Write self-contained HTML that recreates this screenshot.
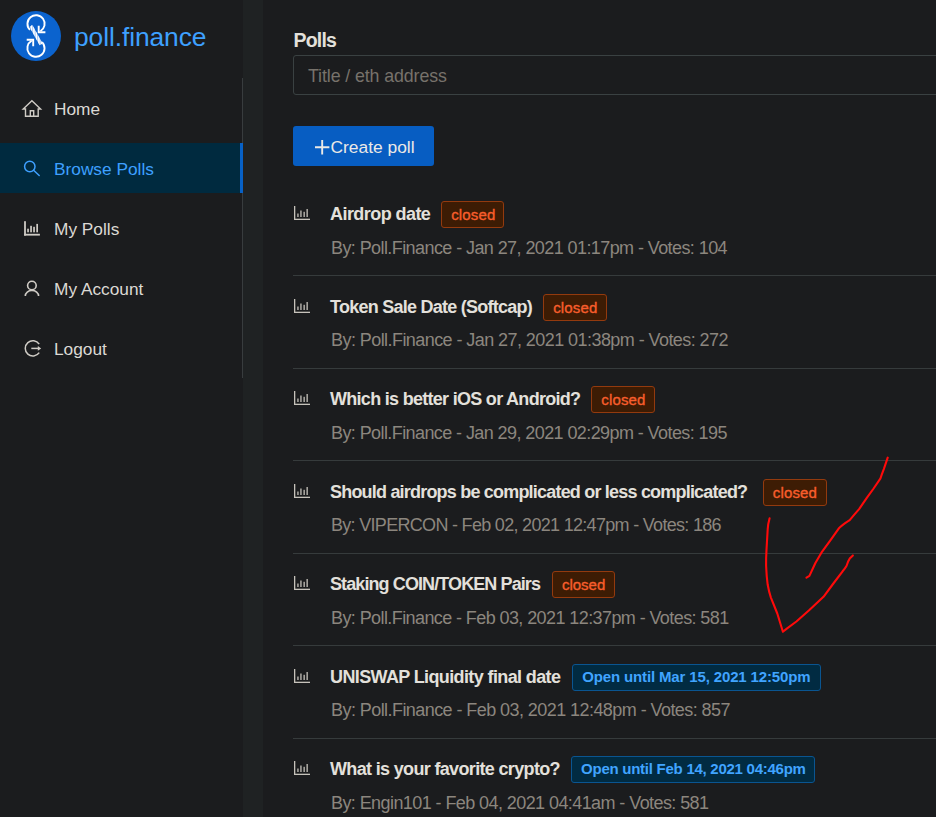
<!DOCTYPE html>
<html><head><meta charset="utf-8">
<style>
*{box-sizing:border-box;margin:0;padding:0}
html,body{width:936px;height:817px;overflow:hidden;background:#1b1c1e;font-family:"Liberation Sans",sans-serif}
.abs{position:absolute}
.t{position:absolute;white-space:nowrap;line-height:1}
#sider{left:0;top:0;width:243px;height:817px;background:#1b1c1e}
#gutter{left:243px;top:0;width:20px;height:817px;background:#1f2223}
#menuline{left:242px;top:78px;width:1px;height:300px;background:#383c3e}
.sel{left:0;top:143px;width:243px;height:50px;background:#002a3f}
.selbar{left:240px;top:143px;width:3px;height:50px;background:#0761c6}
.mi{font-size:17.3px;color:#dcd9d4}
.div{left:293px;width:643px;height:1px;background:#363b3c}
.title{font-size:16.6px;font-weight:700;color:#e3e0db}
.sub{font-size:16.7px;color:#8c867e}
.tag{position:absolute;height:27px;border:1px solid;border-radius:3px;font-size:15px;line-height:25px;white-space:nowrap;padding:0 9px}
.closed{background:#3d1c04;border-color:#933a0e;color:#f85e2c;font-size:15px;-webkit-text-stroke:0.35px #f85e2c}
.open{background:#012b42;border-color:#0a5591;color:#40a4ff;font-size:15px;font-weight:700;line-height:23px}
svg{position:absolute;overflow:visible}
</style></head><body>
<div id="sider" class="abs"></div>
<div id="gutter" class="abs"></div>
<div id="menuline" class="abs"></div>
<div class="abs sel"></div>
<div class="abs selbar"></div>

<!-- logo -->
<svg style="left:0;top:0" width="80" height="78" viewBox="0 0 80 78">
  <circle cx="36" cy="36" r="25" fill="#0b63ce"/>
  <g fill="none" stroke="#ffffff" stroke-width="1.9">
    <path d="M30.0 29.9 A8.6 8.6 0 1 1 40.4 31.2"/>
    <path d="M38.7 25.8 L38.7 32.3 L45.4 32.3"/>
    <path d="M42.0 42.1 A8.6 8.6 0 1 1 31.6 40.8"/>
    <path d="M26.7 39.8 L33.2 39.8 L33.2 46.3"/>
  </g>
  <defs><clipPath id="rc"><path d="M29.4 26.8 L32.4 25 L42.6 43.6 L39.6 45.2 Z"/></clipPath></defs>
  <path d="M29.4 26.8 L32.4 25 L42.6 43.6 L39.6 45.2 Z" fill="#a9c9f2"/>
  <g clip-path="url(#rc)" stroke="#ffffff" stroke-width="1.5">
   <path d="M31.4 23 V33 M33.9 26.5 V37.5 M36.4 31 V41.5 M38.9 35 V46 M41.4 39.5 V48"/>
  </g>
</svg>
<div class="t" style="left:74px;top:24.2px;font-size:26.4px;color:#3ea0ff;letter-spacing:-0.1px">poll.finance</div>

<!-- menu -->
<svg style="left:0;top:80px" width="60" height="300" viewBox="0 80 60 300">
 <g fill="none" stroke="#cfcbc5" stroke-width="1.4" stroke-linejoin="miter">
  <path d="M25.5 116.2 L25.5 109 L23.2 109 L31.9 100.8 L40.6 109 L38.2 109 L38.2 116.2 Z"/>
  <path d="M30.3 116.2 L30.3 110.8 L33.7 110.8 L33.7 116.2"/>
 </g>
 <g fill="none" stroke="#3ea0ff" stroke-width="1.5" stroke-linecap="round">
  <circle cx="29.8" cy="166.5" r="5.2"/>
  <path d="M33.6 170.2 L39.2 175.5"/>
 </g>
 <g fill="#cfcbc5">
  <rect x="24.1" y="221.2" width="1.8" height="14.4"/>
  <rect x="24.1" y="233.8" width="15.8" height="1.8"/>
  <rect x="27.2" y="228.7" width="1.7" height="3.6"/>
  <rect x="30.2" y="225.8" width="1.7" height="6.5"/>
  <rect x="33.2" y="226.8" width="1.7" height="5.5"/>
  <rect x="36.3" y="223.9" width="1.7" height="8.4"/>
 </g>
 <g fill="none" stroke="#cfcbc5" stroke-width="1.6">
  <circle cx="31.9" cy="285.5" r="4.3"/>
  <path d="M25.3 296 A6.65 5.6 0 0 1 38.6 296"/>
 </g>
 <g fill="none" stroke="#cfcbc5" stroke-width="1.5">
  <path d="M39.2 344.2 A7.6 7.6 0 1 0 39.2 352.6"/>
  <path d="M31.3 348.4 L38.5 348.4"/>
 </g>
 <path d="M37.8 346 L41.2 348.4 L37.8 350.8 Z" fill="#cfcbc5"/>
</svg>
<div class="t mi" style="left:54px;top:100.8px">Home</div>
<div class="t mi" style="left:54px;top:160.8px;color:#3ea0ff">Browse Polls</div>
<div class="t mi" style="left:54px;top:220.8px">My Polls</div>
<div class="t mi" style="left:54px;top:280.8px">My Account</div>
<div class="t mi" style="left:54px;top:340.8px">Logout</div>

<!-- content header -->
<div class="t" style="left:293.5px;top:30.6px;font-size:19.5px;font-weight:700;color:#e3e0db;letter-spacing:-0.8px">Polls</div>
<div class="abs" style="left:293px;top:55px;width:700px;height:40px;border:1px solid #3a4142;border-radius:3px"></div>
<div class="t" style="left:308px;top:67.5px;font-size:17.8px;color:#77726b;letter-spacing:-0.1px">Title / eth address</div>
<div class="abs" style="left:293px;top:126px;width:141px;height:40px;background:#075dc2;border-radius:3px"></div>
<svg style="left:314.8px;top:139.8px" width="14.4" height="14.4" viewBox="0 0 14.4 14.4"><path d="M0 7.2 H14.4 M7.2 0 V14.4" stroke="#ebe9e6" stroke-width="1.9"/></svg>
<div class="t" style="left:330.5px;top:139.4px;font-size:17.4px;color:#ebe9e6">Create poll</div>


<div class="abs div" style="top:275.00px"></div>
<svg style="left:294px;top:206.00px" width="16" height="14" viewBox="0 0 16 14"><g fill="#c6c2bb"><rect x="0" y="0" width="1.3" height="14"/><rect x="0" y="12.7" width="16" height="1.3"/><rect x="3.3" y="7.5" width="1.3" height="3.5"/><rect x="6.3" y="4.5" width="1.3" height="6.5"/><rect x="9.5" y="5.8" width="1.3" height="5.2"/><rect x="12.5" y="3" width="1.3" height="8"/></g></svg>
<div class="t title" style="left:330px;top:205.16px;font-size:18.0px;letter-spacing:-0.562px">Airdrop date</div>
<div class="tag closed" style="left:441.2px;width:62.5px;top:201.10px;letter-spacing:0.162px">closed</div>
<div class="t sub" style="left:331px;top:238.96px;font-size:18.0px;letter-spacing:-0.582px">By: Poll.Finance - Jan 27, 2021 01:17pm - Votes: 104</div>
<div class="abs div" style="top:367.50px"></div>
<svg style="left:294px;top:298.50px" width="16" height="14" viewBox="0 0 16 14"><g fill="#c6c2bb"><rect x="0" y="0" width="1.3" height="14"/><rect x="0" y="12.7" width="16" height="1.3"/><rect x="3.3" y="7.5" width="1.3" height="3.5"/><rect x="6.3" y="4.5" width="1.3" height="6.5"/><rect x="9.5" y="5.8" width="1.3" height="5.2"/><rect x="12.5" y="3" width="1.3" height="8"/></g></svg>
<div class="t title" style="left:330px;top:297.66px;font-size:18.0px;letter-spacing:-0.750px">Token Sale Date (Softcap)</div>
<div class="tag closed" style="left:543.2px;width:63.4px;top:293.60px;letter-spacing:0.162px">closed</div>
<div class="t sub" style="left:331px;top:331.46px;font-size:18.0px;letter-spacing:-0.564px">By: Poll.Finance - Jan 27, 2021 01:38pm - Votes: 272</div>
<div class="abs div" style="top:460.00px"></div>
<svg style="left:294px;top:391.00px" width="16" height="14" viewBox="0 0 16 14"><g fill="#c6c2bb"><rect x="0" y="0" width="1.3" height="14"/><rect x="0" y="12.7" width="16" height="1.3"/><rect x="3.3" y="7.5" width="1.3" height="3.5"/><rect x="6.3" y="4.5" width="1.3" height="6.5"/><rect x="9.5" y="5.8" width="1.3" height="5.2"/><rect x="12.5" y="3" width="1.3" height="8"/></g></svg>
<div class="t title" style="left:330px;top:390.16px;font-size:18.0px;letter-spacing:-0.708px">Which is better iOS or Android?</div>
<div class="tag closed" style="left:591.3px;width:63.8px;top:386.10px;letter-spacing:0.162px">closed</div>
<div class="t sub" style="left:331px;top:423.96px;font-size:18.0px;letter-spacing:-0.585px">By: Poll.Finance - Jan 29, 2021 02:29pm - Votes: 195</div>
<div class="abs div" style="top:552.50px"></div>
<svg style="left:294px;top:483.50px" width="16" height="14" viewBox="0 0 16 14"><g fill="#c6c2bb"><rect x="0" y="0" width="1.3" height="14"/><rect x="0" y="12.7" width="16" height="1.3"/><rect x="3.3" y="7.5" width="1.3" height="3.5"/><rect x="6.3" y="4.5" width="1.3" height="6.5"/><rect x="9.5" y="5.8" width="1.3" height="5.2"/><rect x="12.5" y="3" width="1.3" height="8"/></g></svg>
<div class="t title" style="left:330px;top:482.66px;font-size:18.0px;letter-spacing:-0.800px">Should airdrops be complicated or less complicated?</div>
<div class="tag closed" style="left:762.8px;width:64.0px;top:478.60px;letter-spacing:0.162px">closed</div>
<div class="t sub" style="left:331px;top:516.46px;font-size:18.0px;letter-spacing:-0.694px">By: VIPERCON - Feb 02, 2021 12:47pm - Votes: 186</div>
<div class="abs div" style="top:645.00px"></div>
<svg style="left:294px;top:576.00px" width="16" height="14" viewBox="0 0 16 14"><g fill="#c6c2bb"><rect x="0" y="0" width="1.3" height="14"/><rect x="0" y="12.7" width="16" height="1.3"/><rect x="3.3" y="7.5" width="1.3" height="3.5"/><rect x="6.3" y="4.5" width="1.3" height="6.5"/><rect x="9.5" y="5.8" width="1.3" height="5.2"/><rect x="12.5" y="3" width="1.3" height="8"/></g></svg>
<div class="t title" style="left:330px;top:575.16px;font-size:18.0px;letter-spacing:-0.903px">Staking COIN/TOKEN Pairs</div>
<div class="tag closed" style="left:552px;width:62.9px;top:571.10px;letter-spacing:-0.018px">closed</div>
<div class="t sub" style="left:331px;top:608.96px;font-size:18.0px;letter-spacing:-0.589px">By: Poll.Finance - Feb 03, 2021 12:37pm - Votes: 581</div>
<div class="abs div" style="top:737.50px"></div>
<svg style="left:294px;top:668.50px" width="16" height="14" viewBox="0 0 16 14"><g fill="#c6c2bb"><rect x="0" y="0" width="1.3" height="14"/><rect x="0" y="12.7" width="16" height="1.3"/><rect x="3.3" y="7.5" width="1.3" height="3.5"/><rect x="6.3" y="4.5" width="1.3" height="6.5"/><rect x="9.5" y="5.8" width="1.3" height="5.2"/><rect x="12.5" y="3" width="1.3" height="8"/></g></svg>
<div class="t title" style="left:330px;top:667.66px;font-size:18.0px;letter-spacing:-0.620px">UNISWAP Liquidity final date</div>
<div class="tag open" style="left:572.2px;width:248.4px;top:663.60px;letter-spacing:-0.138px">Open until Mar 15, 2021 12:50pm</div>
<div class="t sub" style="left:331px;top:701.46px;font-size:18.0px;letter-spacing:-0.564px">By: Poll.Finance - Feb 03, 2021 12:48pm - Votes: 857</div>
<svg style="left:294px;top:761.00px" width="16" height="14" viewBox="0 0 16 14"><g fill="#c6c2bb"><rect x="0" y="0" width="1.3" height="14"/><rect x="0" y="12.7" width="16" height="1.3"/><rect x="3.3" y="7.5" width="1.3" height="3.5"/><rect x="6.3" y="4.5" width="1.3" height="6.5"/><rect x="9.5" y="5.8" width="1.3" height="5.2"/><rect x="12.5" y="3" width="1.3" height="8"/></g></svg>
<div class="t title" style="left:330px;top:760.16px;font-size:18.0px;letter-spacing:-0.660px">What is your favorite crypto?</div>
<div class="tag open" style="left:571.1px;width:244.3px;top:756.10px;letter-spacing:-0.258px">Open until Feb 14, 2021 04:46pm</div>
<div class="t sub" style="left:331px;top:793.96px;font-size:18.0px;letter-spacing:-0.579px">By: Engin101 - Feb 04, 2021 04:41am - Votes: 581</div>
<svg style="left:0;top:0" width="936" height="817" viewBox="0 0 936 817">
 <g fill="none" stroke="#ff0a0a" stroke-width="2.1" stroke-linecap="round" stroke-linejoin="round">
  <path d="M887.7 457.7 L883.9 468.8 Q881.5 475 880.5 478.3 L873.6 488.5 L866.8 497.9 L859.1 509.1 Q853 516 849.7 520.2 Q842 525 838.5 528.8 L830 540.8 L821.4 552.7 L815.4 563 L809.4 575.9 L806.5 577.6"/>
  <path d="M769.6 518.3 Q768 524 767.7 529.1 L766.5 549.8 Q766 558 766.1 565.7 Q766.5 576 767.7 584.8 Q769 592 770.9 597.6 L777.3 613.5 L782.9 631.8 L786.8 628.6 L796.4 621.5 L809.1 610.3 L823.5 596.8 L833 584 L842.6 571.3 Q845 568.5 846.6 565.7 Q848 561 849.7 558.6 L852.9 555.4"/>
 </g>
</svg>
</body></html>
